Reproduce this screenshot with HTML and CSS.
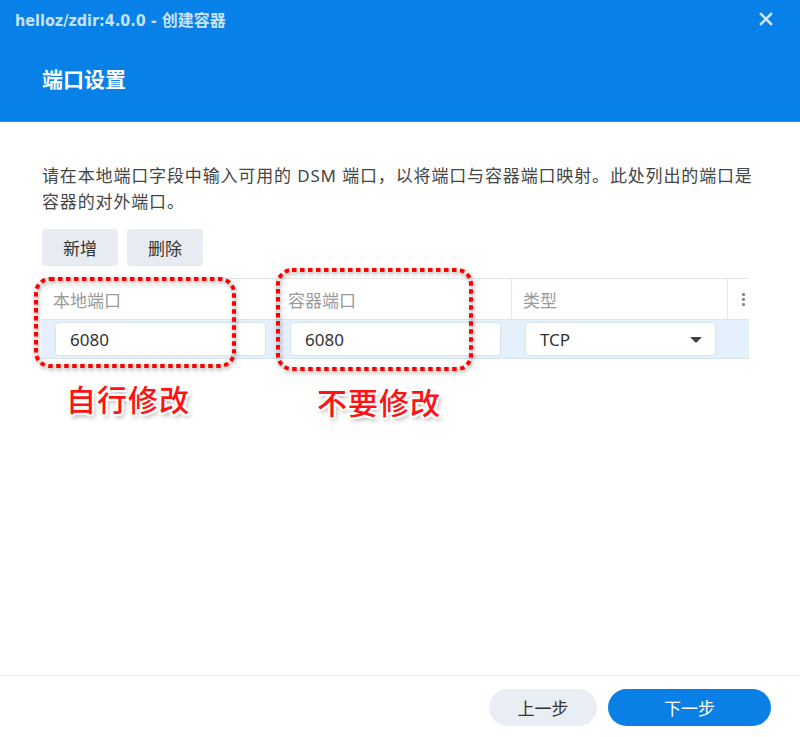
FILE: index.html
```html
<!DOCTYPE html>
<html lang="zh-CN">
<head>
    <meta charset="UTF-8">
    <title>helloz/zdir:4.0.0 - 创建容器</title>
    <link rel="stylesheet" href="styles.css">
</head>
<body>
    <div class="dialog">
        <!-- header -->
        <div class="header">
            <div class="titlebar">
                <span class="title">helloz/zdir:4.0.0 - 创建容器</span>
                <span class="close">
                    <svg width="14" height="14" viewBox="0 0 14 14"><path d="M2 2 L12 12 M12 2 L2 12" stroke="#cfe6fc" stroke-width="2.6" stroke-linecap="square"/></svg>
                </span>
            </div>
            <h1>端口设置</h1>
        </div>

        <!-- body -->
        <div class="content">
            <p class="desc">请在本地端口字段中输入可用的 DSM 端口，以将端口与容器端口映射。此处列出的端口是容器的对外端口。</p>
            <div class="toolbar">
                <button class="btn-flat">新增</button>
                <button class="btn-flat">删除</button>
            </div>

            <div class="grid">
                <div class="grid-head">
                    <div class="cell">本地端口</div>
                    <div class="cell">容器端口</div>
                    <div class="cell">类型</div>
                    <div class="cell more">
                        <span></span><span></span><span></span>
                    </div>
                </div>
                <div class="grid-row">
                    <div class="cell"><div class="field">6080</div></div>
                    <div class="cell"><div class="field">6080</div></div>
                    <div class="cell"><div class="field select">TCP<i class="caret"></i></div></div>
                    <div class="cell"></div>
                </div>
            </div>

            <!-- annotations -->
            <svg class="mark mark-local" width="204" height="93" viewBox="0 0 204 93">
                <rect x="3" y="3" width="198" height="87" rx="14" fill="none" stroke="#f00" stroke-width="4" stroke-dasharray="4.5 3.5"/>
            </svg>
            <svg class="mark mark-container" width="199" height="105" viewBox="0 0 199 105">
                <rect x="3" y="3" width="193" height="99" rx="14" fill="none" stroke="#f00" stroke-width="4" stroke-dasharray="4.5 3.5"/>
            </svg>
            <div class="note note-local">自行修改</div>
            <div class="note note-container">不要修改</div>
        </div>

        <!-- footer -->
        <div class="footer">
            <button class="btn-round btn-back">上一步</button>
            <button class="btn-round btn-next">下一步</button>
        </div>
    </div>
</body>
</html>
```

FILE: styles.css
```css
* {
    box-sizing: border-box;
}
body, html {
    margin: 0;
    padding: 0;
    height: 100%;
    background: #fff;
    font-family: "Noto Sans", "Noto Sans CJK SC", sans-serif;
    overflow: hidden;
}
.dialog {
    height: 737px;
    display: flex;
    flex-direction: column;
}
.header {
    height: 122px;
    background: #0780e7;
    border-bottom: 1px solid #3f8fc8;
}
.titlebar {
    display: flex;
    justify-content: space-between;
    align-items: center;
    height: 38px;
    padding: 0 27px 0 15px;
}
.title {
    color: #c6e2fd;
    font-family: "DejaVu Sans Condensed", "Noto Sans CJK SC", sans-serif;
    font-weight: bold;
    font-size: 16px;
}
.close {
    display: flex;
}
.header h1 {
    margin: 0;
    padding: 23px 42px 0;
    color: #fff;
    font-size: 21px;
    font-weight: bold;
    line-height: 36px;
}
.content {
    position: relative;
    flex: 1;
    padding: 41px 51px 0 42px;
}
.desc {
    width: 722px;
    margin: 0;
    font-size: 17px;
    line-height: 26px;
    letter-spacing: 0.85px;
    color: #454545;
}
.toolbar {
    display: flex;
    gap: 9px;
    margin-top: 14px;
}
.btn-flat {
    width: 76px;
    height: 37px;
    border: none;
    border-radius: 4px;
    background: #e6ecf2;
    color: #333;
    font-family: inherit;
    font-size: 17px;
    padding: 0;
}
.grid {
    margin-top: 12px;
    border-top: 1px solid #dfe5ea;
}
.grid-head, .grid-row {
    display: grid;
    grid-template-columns: 235px 235px 216px 21px;
}
.grid-head {
    height: 40px;
    color: #9a9a9a;
    font-size: 17px;
}
.grid-head .cell {
    display: flex;
    align-items: center;
    padding-left: 11px;
    border-right: 1px solid #e8e8e8;
}
.grid-head .more {
    border-right: none;
    flex-direction: column;
    justify-content: center;
    gap: 2px;
    padding-left: 9px;
}
.more span {
    width: 3px;
    height: 3px;
    border-radius: 1px;
    background: #888;
}
.grid-row {
    height: 40px;
    background: #e4f0fb;
    border-top: 1px solid #dae6ef;
    border-bottom: 1px solid #d6e4ee;
}
.grid-row .cell {
    display: flex;
    align-items: center;
    padding: 0 11px 0 13px;
}
.field {
    flex: 1;
    height: 34px;
    display: flex;
    align-items: center;
    padding-left: 14px;
    background: #fff;
    border: 1px solid #d9e3eb;
    border-radius: 4px;
    color: #333;
    font-size: 17px;
}
.select {
    position: relative;
    margin-right: 1px;
}
.caret {
    position: absolute;
    right: 13px;
    top: 14px;
    border-left: 6px solid transparent;
    border-right: 6px solid transparent;
    border-top: 6px solid #444;
}
.mark {
    position: absolute;
    filter: drop-shadow(1px 2px 2px rgba(0,0,0,0.4));
}
.mark-local {
    left: 33px;
    top: 154px;
}
.mark-container {
    left: 275px;
    top: 145px;
}
.note {
    position: absolute;
    color: #ff1212;
    font-family: "Noto Sans CJK SC", sans-serif;
    font-size: 30px;
    font-weight: 500;
    letter-spacing: 1px;
    text-shadow: -2px 0 #fff, 2px 0 #fff, 0 -2px #fff, 0 2px #fff,
                 -2px -2px #fff, 2px 2px #fff, -2px 2px #fff, 2px -2px #fff,
                 2px 3px 5px rgba(0,0,0,0.45);
}
.note-local {
    left: 66px;
    top: 254px;
}
.note-container {
    left: 317px;
    top: 257px;
}
.footer {
    height: 62px;
    border-top: 1px solid #e6e6e6;
    display: flex;
    justify-content: flex-end;
    align-items: flex-start;
    gap: 11px;
    padding: 13px 29px 0 0;
}
.btn-round {
    height: 37px;
    border: none;
    border-radius: 19px;
    font-family: inherit;
    font-size: 17px;
    padding: 0;
}
.btn-back {
    width: 108px;
    background: #e8eef4;
    color: #333;
}
.btn-next {
    width: 163px;
    background: #0a7fe6;
    color: #fff;
}
```
